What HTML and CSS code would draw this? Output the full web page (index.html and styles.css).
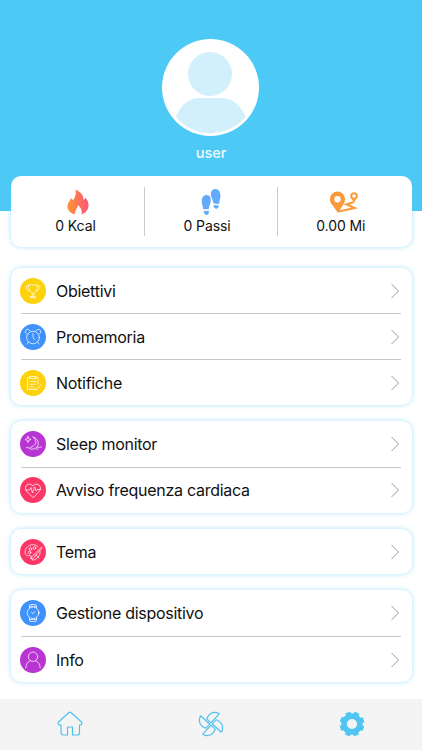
FILE: index.html
```
<!DOCTYPE html>
<html lang="it">
<head>
  <meta charset="UTF-8">
  <meta name="viewport" content="width=device-width, initial-scale=1.0">
  <title>Profilo</title>
  <link rel="stylesheet" href="styles.css">
</head>
<body>
  <header class="header">
    <svg class="avatar" viewBox="0 0 97 97">
      <circle cx="48.500" cy="48.500" r="48.500" fill="#fff"/>
      <circle cx="48" cy="35" r="22" fill="#d2effc"/>
      <path d="M14 78C18 66 27 59 38 59H59C70 59 79 66 83.500 78A45.500 45.500 0 0 1 14 78Z" fill="#d2effc"/>
    </svg>
    <div class="username">user</div>
  </header>

  <main class="content">
    <section class="card stats">
      <div class="stat">
        <svg viewBox="0 0 28 28">
          <defs>
            <linearGradient id="fire" x1="0" y1="0" x2="1" y2="0">
              <stop offset="0" stop-color="#fb9534"/>
              <stop offset="1" stop-color="#fd557b"/>
            </linearGradient>
          </defs>
          <path d="M11.500 1.500C17 4 20 8 19.500 12C20.500 11.700 21 10.500 21.200 9.500C26 14 26.500 23 17.500 26.500C18.500 23 17 20 14 17C13.500 21 10.500 22 11 26.500C3.500 24.500 1.500 18 5.500 13C6.500 11.500 6.500 11 6.500 10.200C7.800 10.700 8.500 11.500 9 12C11.500 9 12.500 6 11.500 1.500Z" fill="url(#fire)"/>
        </svg>
        <span>0 Kcal</span>
      </div>
      <div class="stat">
        <svg viewBox="0 0 28 28" fill="#62abfb">
          <path d="M18 1C22.500 .5 24.500 6 23 11L22 16L16.500 15.500C16 11 13.500 9 13.800 6C14 3 15.500 1.200 18 1Z"/>
          <path d="M16.500 17L21.800 17.500C21.500 22 16.500 22 16.500 17Z"/>
          <path d="M9 7C13 6.500 14.500 10 13.500 14.500C13 16.500 12 18 11.800 21L6.500 21.500L5.500 18C4 13 4.500 7.800 9 7Z"/>
          <path d="M6.500 23.300L11.800 22.800C12.500 28 7.500 28.500 6.500 23.300Z"/>
        </svg>
        <span>0 Passi</span>
      </div>
      <div class="stat">
        <svg viewBox="0 0 28 28" fill="none" stroke="#f99b3c">
          <circle cx="7.500" cy="11.200" r="5.400" stroke-width="4.400"/>
          <path d="M.5 14.500L8 25L14.500 14.500L10 17H5Z" fill="#f99b3c" stroke="none"/>
          <circle cx="24" cy="8" r="2.800" stroke-width="2"/>
          <path d="M21 10L24 14.500L27 10L24 11.500Z" fill="#f99b3c" stroke="none"/>
          <path d="M24 14L16.500 16.500L24.500 20L9 23.500" stroke-width="2.200"/>
        </svg>
        <span>0.00 Mi</span>
      </div>
    </section>

    <section class="card">
      <div class="row">
        <svg class="icon yellow" viewBox="0 0 26 26">
          <path d="M8.500 7H17.500C17.500 11 16.500 14 13 15.500C9.500 14 8.500 11 8.500 7ZM8.500 8H6C6 11 7.500 12.500 9.500 13M17.500 8H20C20 11 18.500 12.500 16.500 13M12.200 15.500V18M13.800 15.500V18M10.500 18.500H15.500V19.800H10.500Z"/>
        </svg>
        <span>Obiettivi</span>
        <svg class="arrow" viewBox="0 0 8 14"><path d="M.5 0L7.500 7L.5 14"/></svg>
      </div>
      <div class="row">
        <svg class="icon blue" viewBox="0 0 26 26">
          <circle cx="13" cy="13.500" r="6.300"/>
          <path d="M13 9.500V13.500L14.500 15.500M6.500 10A2.500 2.500 0 1 1 10 6.800M16 6.800A2.500 2.500 0 1 1 19.500 10M8.500 18L7 20M17.500 18L19 20"/>
        </svg>
        <span>Promemoria</span>
        <svg class="arrow" viewBox="0 0 8 14"><path d="M.5 0L7.500 7L.5 14"/></svg>
      </div>
      <div class="row">
        <svg class="icon yellow" viewBox="0 0 26 26">
          <path d="M10 7.500H7.500V19.500H16M16 7.500H18V14M10 6.500H16V8.500H10ZM10 11.500H16M10 14.300H16M10 17H13M14 17.500L16.500 19.800L21 14.500"/>
        </svg>
        <span>Notifiche</span>
        <svg class="arrow" viewBox="0 0 8 14"><path d="M.5 0L7.500 7L.5 14"/></svg>
      </div>
    </section>

    <section class="card">
      <div class="row">
        <svg class="icon purple" viewBox="0 0 26 26">
          <path d="M8 5.500L8.800 7.700L11 8.500L8.800 9.300L8 11.500L7.200 9.300L5 8.500L7.200 7.700ZM13 6C17.500 9 17 15 10 16.500M13 6C18 7.500 20 12 17 16M6.500 16.500C9 15.500 10 19.500 13 18C15 17 15.500 18.500 18 18M16 16.500C18 15.500 19 17 21.500 16"/>
        </svg>
        <span>Sleep monitor</span>
        <svg class="arrow" viewBox="0 0 8 14"><path d="M.5 0L7.500 7L.5 14"/></svg>
      </div>
      <div class="row">
        <svg class="icon red" viewBox="0 0 26 26">
          <path d="M13 20.500L6.500 14C3 9 9 4.500 13 9C17 4.500 23 9 19.500 14ZM5.500 13H9.500L11 10.500L12.500 16L14.500 10L16 14L17 12.500H20.500"/>
        </svg>
        <span>Avviso frequenza cardiaca</span>
        <svg class="arrow" viewBox="0 0 8 14"><path d="M.5 0L7.500 7L.5 14"/></svg>
      </div>
    </section>

    <section class="card">
      <div class="row">
        <svg class="icon red" viewBox="0 0 26 26">
          <path d="M18 7.500C13 3 5 7 5 13C5 16 7 17.500 9 16.500C12 15.500 10 20.500 13 21C17 21 21 16 20 12M21.500 8L13.500 16C12 16.500 12 18 10.500 19.500C13 20 15 18.500 15 17L22 9M16 16L19 19"/>
          <circle cx="9.500" cy="13.500" r="1.300"/>
          <circle cx="10.500" cy="10" r="1.300"/>
          <circle cx="14.500" cy="9" r="1.300"/>
        </svg>
        <span>Tema</span>
        <svg class="arrow" viewBox="0 0 8 14"><path d="M.5 0L7.500 7L.5 14"/></svg>
      </div>
    </section>

    <section class="card">
      <div class="row">
        <svg class="icon blue" viewBox="0 0 26 26">
          <circle cx="13" cy="12.800" r="5.800"/>
          <path d="M9.500 8V6L10.300 4.500H15.700L16.500 6V8M9.500 17.800V20L10.300 21.500H15.700L16.500 20V17.800M9.500 6.300H16.500M9.500 19.500H16.500M11.500 12L12.800 13.800L15 11.500M19 12V14"/>
        </svg>
        <span>Gestione dispositivo</span>
        <svg class="arrow" viewBox="0 0 8 14"><path d="M.5 0L7.500 7L.5 14"/></svg>
      </div>
      <div class="row">
        <svg class="icon purple" viewBox="0 0 26 26">
          <circle cx="13" cy="9.700" r="4.700"/>
          <path d="M5.800 21C6 16.500 8 14.500 10.500 13.800M20.200 21C20 16.500 18 14.500 15.500 13.800"/>
        </svg>
        <span>Info</span>
        <svg class="arrow" viewBox="0 0 8 14"><path d="M.5 0L7.500 7L.5 14"/></svg>
      </div>
    </section>
  </main>

  <nav class="tabbar">
    <a class="tab">
      <svg viewBox="0 0 26 26" class="outline">
        <path d="M11.700 1.700Q13 .6 14.300 1.700L24.500 11Q25.500 12.500 24 14H22.500V21.500Q22.500 24 20 24H15.500V16H10.500V24H6.500Q4 24 4 21.500V14H2Q.5 12.500 1.500 11Z"/>
      </svg>
    </a>
    <a class="tab">
      <svg viewBox="0 0 26 26" class="outline">
        <path id="blade" d="M12.800 11.800L8.700 7.700C10.500 2.500 15 0 20.800 2.300Q21.300 2.700 20.800 3.300Z"/>
        <use href="#blade" transform="rotate(90 13 13)"/>
        <use href="#blade" transform="rotate(180 13 13)"/>
        <use href="#blade" transform="rotate(270 13 13)"/>
      </svg>
    </a>
    <a class="tab">
      <svg viewBox="0 0 26 26" fill="none" stroke="#50c5f2">
        <circle cx="13" cy="13" r="7.900" stroke-width="5.600"/>
        <circle cx="13" cy="13" r="10.700" stroke-width="3.400" stroke-dasharray="5 3.403" stroke-dashoffset="-1.700"/>
      </svg>
    </a>
  </nav>
</body>
</html>
```
FILE: styles.css
```
* {
  box-sizing: border-box;
}
body {
  margin: 0;
  height: 750px;
  display: flex;
  flex-direction: column;
  overflow: hidden;
  background: #fff;
  color: #111;
  font-family: Inter, "Liberation Sans", sans-serif;
}
svg {
  display: block;
}
.header {
  height: 211px;
  padding: 39px 1px 0 0;
  display: flex;
  flex-direction: column;
  align-items: center;
  background: #4dc9f6;
}
.avatar {
  width: 97px;
  height: 97px;
}
.username {
  margin-top: 8px;
  padding-left: 1px;
  font-size: 14.5px;
  line-height: 18px;
  font-weight: 500;
  color: #effaff;
}
.content {
  flex: 1;
  margin-top: -35.5px;
  padding: 0 10.5px;
  display: flex;
  flex-direction: column;
  gap: 16px;
}
.card {
  background: #fff;
  border-radius: 10px;
  padding: 0 10.5px;
  box-shadow: 0 0 5px rgba(77, 201, 246, 0.5);
}
.stats {
  height: 71px;
  margin-bottom: 5.2px;
  padding: 11px 0;
  display: grid;
  grid-template-columns: 133.5px 133px 134.5px;
}
.stat {
  display: flex;
  flex-direction: column;
  align-items: center;
  padding: 1px 3.5px 0 0;
  font-size: 14px;
  line-height: 20px;
  letter-spacing: -0.1px;
}
.stat + .stat {
  border-left: 1px solid #ccc;
  padding: 1px 8px 0 0;
}
.stat svg {
  width: 28px;
  height: 28px;
  margin-left: 5px;
}
.stat + .stat svg {
  margin-left: 7px;
}
.row {
  height: 45.8px;
  display: flex;
  align-items: center;
  font-size: 16px;
  letter-spacing: -0.28px;
}
.row + .row {
  border-top: 1px solid #c8c8ca;
}
.icon {
  width: 26px;
  height: 26px;
  margin: 0 10px 0 -1px;
  border-radius: 50%;
  fill: none;
  stroke: #fff;
  stroke-opacity: 0.8;
  stroke-width: 0.9;
  stroke-linejoin: round;
  stroke-linecap: round;
}
.yellow {
  background: #fdd10b;
}
.blue {
  background: #3f92fc;
}
.purple {
  background: #b935d3;
}
.red {
  background: #fc3768;
}
.arrow {
  width: 8px;
  height: 14px;
  margin-left: auto;
  margin-right: 2px;
  fill: none;
  stroke: #9a9a9f;
}
.tabbar {
  height: 51px;
  display: grid;
  grid-template-columns: repeat(3, 1fr);
  justify-items: center;
  padding-top: 12px;
  background: #f4f4f4;
}
.tab svg {
  width: 26px;
  height: 26px;
}
.outline {
  fill: none;
  stroke: #50c0ec;
  stroke-width: 1.2;
  stroke-linejoin: round;
}
```
